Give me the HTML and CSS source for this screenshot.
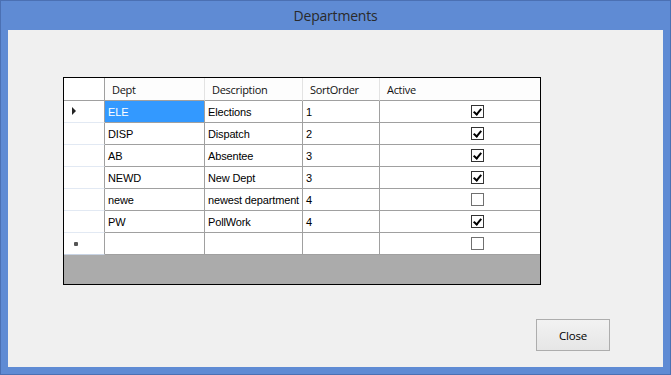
FILE: index.html
```html
<!DOCTYPE html>
<html>
<head>
<meta charset="utf-8">
<link rel="stylesheet" href="styles.css">
</head>
<body>
<div class="window">
  <div class="titlebar">Departments</div>
  <div class="client">
    <div class="grid">
      <div class="hdr corner"></div>
      <div class="hdr">Dept</div>
      <div class="hdr">Description</div>
      <div class="hdr">SortOrder</div>
      <div class="hdr last">Active</div>

      <div class="rh"><span class="arrow"></span></div>
      <div class="cell sel">ELE</div>
      <div class="cell">Elections</div>
      <div class="cell">1</div>
      <div class="cell chk"><span class="box on"></span></div>

      <div class="rh"></div>
      <div class="cell">DISP</div>
      <div class="cell">Dispatch</div>
      <div class="cell">2</div>
      <div class="cell chk"><span class="box on"></span></div>

      <div class="rh"></div>
      <div class="cell">AB</div>
      <div class="cell">Absentee</div>
      <div class="cell">3</div>
      <div class="cell chk"><span class="box on"></span></div>

      <div class="rh"></div>
      <div class="cell">NEWD</div>
      <div class="cell">New Dept</div>
      <div class="cell">3</div>
      <div class="cell chk"><span class="box on"></span></div>

      <div class="rh"></div>
      <div class="cell">newe</div>
      <div class="cell">newest department</div>
      <div class="cell">4</div>
      <div class="cell chk"><span class="box"></span></div>

      <div class="rh"></div>
      <div class="cell">PW</div>
      <div class="cell">PollWork</div>
      <div class="cell">4</div>
      <div class="cell chk"><span class="box on"></span></div>

      <div class="rh newrow"><span class="star"></span></div>
      <div class="cell"></div>
      <div class="cell"></div>
      <div class="cell"></div>
      <div class="cell chk"><span class="box"></span></div>

      <div class="empty"></div>
    </div>
    <div class="footer">
      <button class="btn">Close</button>
    </div>
  </div>
</div>
</body>
</html>
```

FILE: styles.css
```css
html, body {
  margin: 0;
  padding: 0;
}
body {
  width: 671px;
  height: 375px;
  overflow: hidden;
  font-family: "Liberation Sans", Arial, sans-serif;
}
.window {
  box-sizing: border-box;
  width: 671px;
  height: 375px;
  background: #5f8bd4;
  border: 1px solid #4b70b3;
  display: flex;
  flex-direction: column;
  padding: 0 7px 7px 7px;
}
.titlebar {
  height: 29px;
  flex: none;
  display: flex;
  align-items: center;
  justify-content: center;
  font-family: "Open Sans", "Noto Sans", sans-serif;
  font-size: 14px;
  color: #2a2a2a;
  letter-spacing: -0.2px;
  padding-bottom: 1px;
  box-sizing: border-box;
}
.client {
  flex: 1;
  background: #f0f0f0;
  padding: 47px 53px 0 55px;
  display: flex;
  flex-direction: column;
}
.grid {
  width: 476px;
  border: 1px solid #000;
  display: grid;
  grid-template-columns: 41px 100px 98px 77px 160px;
  grid-template-rows: 23px repeat(7, 22px) 29px;
  background: #ababab;
}
.hdr {
  box-sizing: border-box;
  background: #fdfdfd;
  border-right: 1px solid #e3e3e3;
  border-bottom: 1px solid #a0a0a0;
  font-family: "Open Sans", "Noto Sans", sans-serif;
  font-size: 11px;
  color: #111;
  padding-left: 7px;
  display: flex;
  align-items: center;
  letter-spacing: -0.3px;
}
.hdr.corner {
  border-right: 1px solid #a0a0a0;
  background: #fff;
}
.hdr.last {
  border-right: none;
}
.rh {
  box-sizing: border-box;
  background: #fff;
  border-right: 1px solid #a0a0a0;
  border-bottom: 1px solid #e2e9f3;
  position: relative;
}
.rh.newrow {
  border-bottom: 1px solid #c8d3e3;
}
.arrow {
  position: absolute;
  left: 8px;
  top: 6px;
  width: 0;
  height: 0;
  border-top: 4px solid transparent;
  border-bottom: 4px solid transparent;
  border-left: 4px solid #222;
}
.star {
  position: absolute;
  left: 10px;
  top: 9px;
  width: 4px;
  height: 4px;
  background: #555;
  border-radius: 1px;
}
.cell {
  box-sizing: border-box;
  background: #fff;
  border-right: 1px solid #a0a0a0;
  border-bottom: 1px solid #a0a0a0;
  font-size: 11px;
  letter-spacing: -0.15px;
  color: #000;
  padding-left: 3px;
  display: flex;
  align-items: center;
  white-space: nowrap;
  overflow: hidden;
}
.cell.sel {
  background: #3399ff;
  color: #fff;
}
.cell.chk {
  border-right: none;
  padding-left: 91px;
}
.box {
  box-sizing: border-box;
  width: 13px;
  height: 13px;
  border: 1px solid #333;
  background: #fff;
  position: relative;
}
.box:not(.on) {
  border-color: #707070;
}
.box.on::after {
  content: "";
  position: absolute;
  left: 3px;
  top: 1px;
  width: 3px;
  height: 6px;
  border-right: 2px solid #000;
  border-bottom: 2px solid #000;
  transform: rotate(40deg);
}
.empty {
  grid-column: 1 / -1;
  background: #ababab;
}
.footer {
  display: flex;
  justify-content: flex-end;
  padding-top: 34px;
}
.btn {
  width: 74px;
  height: 32px;
  box-sizing: border-box;
  border: 1px solid #adadad;
  background: linear-gradient(#f2f2f2, #e6e6e6);
  font-family: "Open Sans", "Noto Sans", sans-serif;
  font-size: 11.5px;
  color: #000;
  padding: 0;
  letter-spacing: -0.2px;
}
```
